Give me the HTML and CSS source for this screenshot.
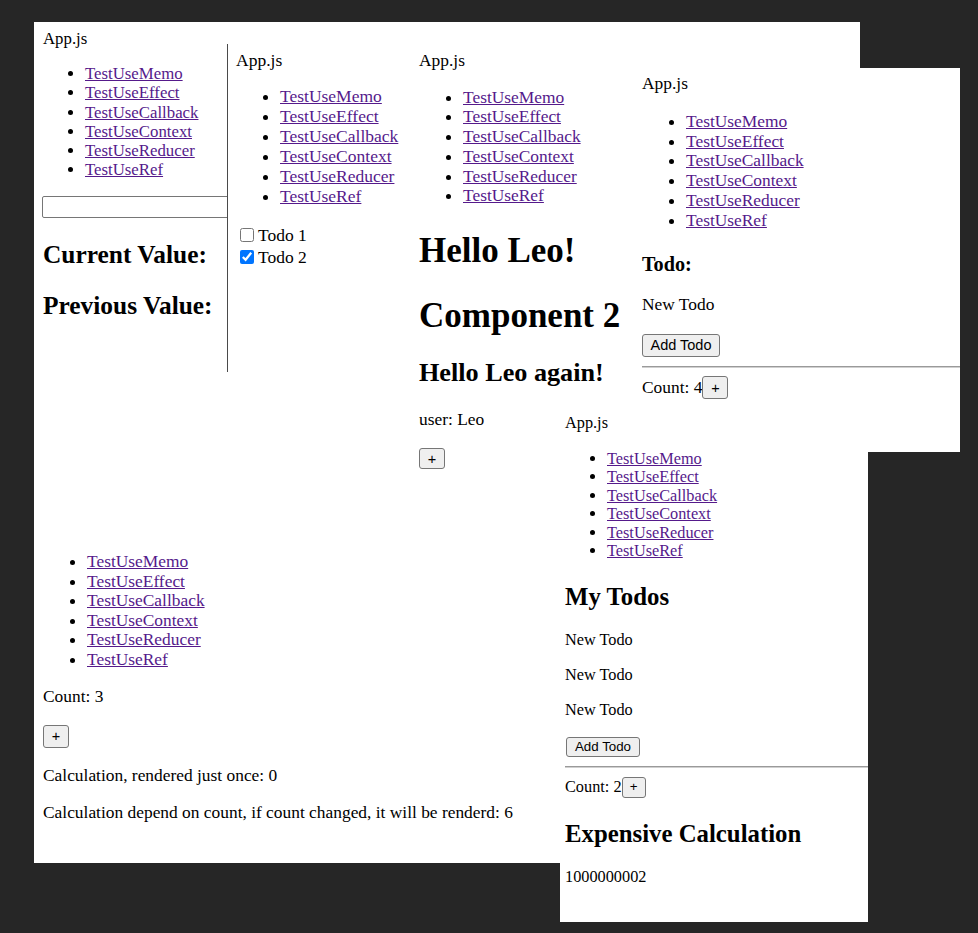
FILE: index.html
```html
<!DOCTYPE html>
<html>
<head>
<meta charset="utf-8">
<link rel="stylesheet" href="styles.css">
</head>
<body>
<div class="desk">

  <section class="win w1">
    <div class="title">App.js</div>
    <ul class="nav">
      <li><a href="#">TestUseMemo</a></li>
      <li><a href="#">TestUseEffect</a></li>
      <li><a href="#">TestUseCallback</a></li>
      <li><a href="#">TestUseContext</a></li>
      <li><a href="#">TestUseReducer</a></li>
      <li><a href="#">TestUseRef</a></li>
    </ul>
    <input class="field" type="text">
    <h2 class="h-cur">Current Value:</h2>
    <h2 class="h-prev">Previous Value:</h2>
  </section>

  <section class="win w2">
    <div class="title">App.js</div>
    <ul class="nav">
      <li><a href="#">TestUseMemo</a></li>
      <li><a href="#">TestUseEffect</a></li>
      <li><a href="#">TestUseCallback</a></li>
      <li><a href="#">TestUseContext</a></li>
      <li><a href="#">TestUseReducer</a></li>
      <li><a href="#">TestUseRef</a></li>
    </ul>
    <div class="checks">
      <label class="check-row"><input type="checkbox" class="cb">Todo 1</label>
      <label class="check-row"><input type="checkbox" class="cb" checked>Todo 2</label>
    </div>
  </section>

  <section class="win w3">
    <div class="title">App.js</div>
    <ul class="nav">
      <li><a href="#">TestUseMemo</a></li>
      <li><a href="#">TestUseEffect</a></li>
      <li><a href="#">TestUseCallback</a></li>
      <li><a href="#">TestUseContext</a></li>
      <li><a href="#">TestUseReducer</a></li>
      <li><a href="#">TestUseRef</a></li>
    </ul>
    <h1 class="h-hello">Hello Leo!</h1>
    <h1 class="h-comp">Component 2</h1>
    <h2 class="h-again">Hello Leo again!</h2>
    <p class="user">user: Leo</p>
    <button class="btn btn-plus3">+</button>
  </section>

  <section class="win w4">
    <div class="title">App.js</div>
    <ul class="nav">
      <li><a href="#">TestUseMemo</a></li>
      <li><a href="#">TestUseEffect</a></li>
      <li><a href="#">TestUseCallback</a></li>
      <li><a href="#">TestUseContext</a></li>
      <li><a href="#">TestUseReducer</a></li>
      <li><a href="#">TestUseRef</a></li>
    </ul>
    <h3 class="h-todo">Todo:</h3>
    <p class="todo4">New Todo</p>
    <button class="btn btn-add4">Add Todo</button>
    <hr class="rule rule4">
    <div class="count-row count4">Count: 4<button class="btn btn-plus4">+</button></div>
  </section>

  <section class="win w5">
    <ul class="nav">
      <li><a href="#">TestUseMemo</a></li>
      <li><a href="#">TestUseEffect</a></li>
      <li><a href="#">TestUseCallback</a></li>
      <li><a href="#">TestUseContext</a></li>
      <li><a href="#">TestUseReducer</a></li>
      <li><a href="#">TestUseRef</a></li>
    </ul>
    <p class="count5">Count: 3</p>
    <button class="btn btn-plus5">+</button>
    <p class="calc1">Calculation, rendered just once: 0</p>
    <p class="calc2">Calculation depend on count, if count changed, it will be renderd: 6</p>
  </section>

  <section class="win w6">
    <div class="title">App.js</div>
    <ul class="nav">
      <li><a href="#">TestUseMemo</a></li>
      <li><a href="#">TestUseEffect</a></li>
      <li><a href="#">TestUseCallback</a></li>
      <li><a href="#">TestUseContext</a></li>
      <li><a href="#">TestUseReducer</a></li>
      <li><a href="#">TestUseRef</a></li>
    </ul>
    <h2 class="h-mytodos">My Todos</h2>
    <p class="todo6 first">New Todo</p>
    <p class="todo6">New Todo</p>
    <p class="todo6">New Todo</p>
    <button class="btn btn-add6">Add Todo</button>
    <hr class="rule rule6">
    <div class="count-row count6">Count: 2<button class="btn btn-plus6">+</button></div>
    <h2 class="h-exp">Expensive Calculation</h2>
    <p class="result">1000000002</p>
  </section>

</div>
</body>
</html>
```

FILE: styles.css
```css
html, body {
  margin: 0;
  padding: 0;
  background: #262626;
}

.desk {
  position: relative;
  width: 978px;
  height: 933px;
  overflow: hidden;
  background: #262626;
}

.win {
  position: absolute;
  box-sizing: border-box;
  background: #ffffff;
  overflow: hidden;
  font-family: "Liberation Serif", "Times New Roman", serif;
  color: #000;
  white-space: nowrap;
}

.win h1, .win h2, .win h3, .win p, .win ul, .win hr {
  margin-bottom: 0;
}

.title {
  margin: 0;
}

.nav {
  list-style: disc outside;
}

.nav a {
  color: #551a8b;
  text-decoration: underline;
}

.btn {
  display: block;
  box-sizing: border-box;
  font-family: "Liberation Sans", Arial, sans-serif;
  color: #000;
  background: #efefef;
  border: 1px solid #767676;
  border-radius: 3px;
  padding: 0;
  text-align: center;
}

.rule {
  height: 0;
  border: 0;
  border-top: 1px solid #9a9a9a;
  border-bottom: 1px solid #d0d0d0;
  margin-left: 0;
  margin-right: 0;
}

.count-row {
  display: flex;
  align-items: center;
}

/* ---------- window 1 ---------- */
.w1 {
  left: 34px;
  top: 22px;
  width: 826px;
  height: 841px;
  padding: 7px 0 0 9px;
  font-size: 16.8px;
  line-height: 19.2px;
}
.w1 .nav { margin-top: 16px; padding-left: 42px; }
.field {
  display: block;
  box-sizing: border-box;
  margin: 17px 0 0 -1px;
  width: 240px;
  height: 22px;
  border: 1px solid #767676;
  border-radius: 2px;
  background: #fff;
}
.w1 h2 { font-size: 25.4px; line-height: 28.8px; font-weight: bold; }
.h-cur { margin-top: 22px; }
.h-prev { margin-top: 22px; }

/* ---------- window 2 ---------- */
.w2 {
  left: 227px;
  top: 44px;
  width: 200px;
  height: 328px;
  border-left: 1px solid #4a4a4a;
  padding: 6px 0 0 8px;
  font-size: 17.5px;
  line-height: 20px;
}
.w2 .nav { margin-top: 16px; padding-left: 44px; }
.checks { margin-top: 18px; }
.check-row {
  display: flex;
  align-items: center;
  height: 22px;
}
.cb {
  width: 14px;
  height: 14px;
  margin: 0 4px 0 4px;
}

/* ---------- window 3 ---------- */
.w3 {
  left: 410px;
  top: 44px;
  width: 240px;
  height: 490px;
  padding: 7px 0 0 9px;
  font-size: 17.4px;
  line-height: 19.7px;
}
.w3 .nav { margin-top: 17px; padding-left: 44px; }
.w3 h1 { font-size: 35px; line-height: 39.5px; }
.h-hello { margin-top: 25px; }
.h-comp { margin-top: 26px; }
.h-again { margin-top: 22px; font-size: 26.2px; line-height: 29.7px; }
.user { margin-top: 22px; }
.btn-plus3 {
  margin-top: 19px;
  width: 26px;
  height: 21px;
  font-size: 14.5px;
  line-height: 18px;
}

/* ---------- window 4 ---------- */
.w4 {
  left: 632px;
  top: 68px;
  width: 328px;
  height: 384px;
  padding: 6px 0 0 10px;
  font-size: 17.4px;
  line-height: 19.8px;
}
.w4 .nav { margin-top: 18px; padding-left: 44px; }
.h-todo { margin-top: 22px; font-size: 20.2px; line-height: 23px; }
.todo4 { margin-top: 19.5px; }
.btn-add4 {
  margin-top: 19px;
  width: 78px;
  height: 23px;
  font-size: 14.5px;
  line-height: 20px;
}
.rule4 { margin-top: 9.5px; }
.count4 { margin-top: 8px; height: 23px; }
.btn-plus4 {
  width: 26px;
  height: 23px;
  font-size: 14.5px;
  line-height: 20px;
}

/* ---------- window 5 ---------- */
.w5 {
  left: 34px;
  top: 530px;
  width: 526px;
  height: 333px;
  padding: 22px 0 0 9px;
  font-size: 17.4px;
  line-height: 19.5px;
}
.w5 .nav { margin-top: 0; padding-left: 44px; }
.count5 { margin-top: 18px; }
.btn-plus5 {
  margin-top: 18px;
  width: 26px;
  height: 23px;
  font-size: 14.5px;
  line-height: 20px;
}
.calc1 { margin-top: 18px; }
.calc2 { margin-top: 18.3px; }

/* ---------- window 6 ---------- */
.w6 {
  left: 560px;
  top: 405px;
  width: 308px;
  height: 517px;
  padding: 9px 0 0 5px;
  font-size: 16.3px;
  line-height: 18.4px;
}
.w6 .nav { margin-top: 17.6px; padding-left: 42px; }
.w6 h2 { font-size: 24.8px; line-height: 27.6px; }
.h-mytodos { margin-top: 22.7px; }
.todo6 { margin-top: 16.6px; }
.todo6.first { margin-top: 20.3px; }
.btn-add6 {
  margin-top: 17.5px;
  margin-left: 1px;
  width: 74px;
  height: 20px;
  font-size: 13.33px;
  line-height: 17px;
}
.rule6 { margin-top: 9px; }
.count6 { margin-top: 9px; height: 21px; }
.btn-plus6 {
  width: 24px;
  height: 21px;
  font-size: 13.33px;
  line-height: 18px;
}
.h-exp { margin-top: 22px; }
.result { margin-top: 20.7px; }
```
